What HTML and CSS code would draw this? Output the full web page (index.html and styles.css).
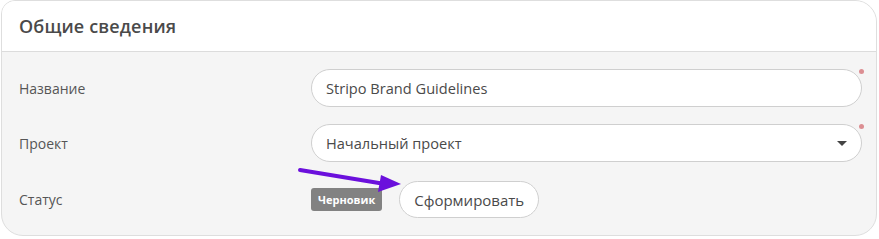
FILE: index.html
```
<!DOCTYPE html>
<html lang="ru">
<head>
<meta charset="utf-8">
<link rel="stylesheet" href="styles.css">
</head>
<body>
<div class="panel">
  <div class="panel-head">Общие сведения</div>
  <div class="panel-body">
    <div class="label">Название</div>
    <div class="control">
      <div class="field">Stripo Brand Guidelines</div>
      <span class="req"></span>
    </div>
    <div class="label">Проект</div>
    <div class="control">
      <div class="field select">Начальный проект<span class="caret"></span></div>
      <span class="req"></span>
    </div>
    <div class="label status-label">Статус</div>
    <div class="control status">
      <span class="badge">Черновик</span>
      <button class="btn">Сформировать</button>
      <svg class="arrow" width="110" height="30" viewBox="0 0 110 30">
        <line x1="3" y1="4" x2="88" y2="18" stroke="#6b10dc" stroke-width="4" stroke-linecap="round"/>
        <polygon points="104,18 84,9 81,26" fill="#6b10dc"/>
      </svg>
    </div>
  </div>
</div>
</body>
</html>
```
FILE: styles.css
```
html, body {
  margin: 0;
  padding: 0;
  background: #ffffff;
}
body {
  padding: 0 2px 0 1px;
  font-family: "Open Sans", "Noto Sans", sans-serif;
  color: #444;
}
.panel {
  height: 236px;
  box-sizing: border-box;
  border: 1px solid #dedede;
  border-radius: 14px 22px 22px 22px;
  overflow: hidden;
  background: #f5f5f5;
  display: flex;
  flex-direction: column;
}
.panel-head {
  height: 51px;
  box-sizing: border-box;
  background: #fff;
  border-bottom: 1px solid #dcdcdc;
  padding: 0 17px;
  display: flex;
  align-items: center;
  font-size: 18px;
  font-weight: 600;
  color: #4a4a4a;
  letter-spacing: 0.15px;
}
.panel-body {
  display: grid;
  grid-template-columns: 292px 1fr;
  row-gap: 17px;
  padding: 17px 14px 0 17px;
}
.label {
  display: flex;
  align-items: center;
  font-size: 14px;
  color: #565656;
}
.control {
  position: relative;
  height: 38px;
}
.field {
  height: 38px;
  box-sizing: border-box;
  border: 1px solid #cfcfcf;
  border-radius: 19px;
  background: #fff;
  padding: 0 14px;
  display: flex;
  align-items: center;
  font-size: 14.6px;
  color: #4a4a4a;
}
.select {
  justify-content: space-between;
}
.caret {
  width: 0;
  height: 0;
  border-left: 5px solid transparent;
  border-right: 5px solid transparent;
  border-top: 5px solid #444;
  margin-right: 0;
}
.req {
  position: absolute;
  top: 0;
  right: -2px;
  width: 5px;
  height: 5px;
  border-radius: 50%;
  background: #dc8f93;
}
.status-label {
  padding-top: 2px;
}
.status {
  display: flex;
  align-items: center;
  gap: 17px;
  padding-top: 2px;
  height: 37px;
}
.badge {
  background: #828282;
  color: #fff;
  font-size: 11px;
  font-weight: 700;
  height: 23px;
  padding: 0 7px;
  border-radius: 3px;
  display: flex;
  align-items: center;
  font-family: "Open Sans", sans-serif;
}
.btn {
  height: 37px;
  box-sizing: border-box;
  border: 1px solid #cfcfcf;
  border-radius: 19px;
  background: #fff;
  padding: 0 14px;
  font-family: "Open Sans", "Noto Sans", sans-serif;
  font-size: 15px;
  color: #4a4a4a;
}
.arrow {
  position: absolute;
  left: -14px;
  top: -13px;
}
```
